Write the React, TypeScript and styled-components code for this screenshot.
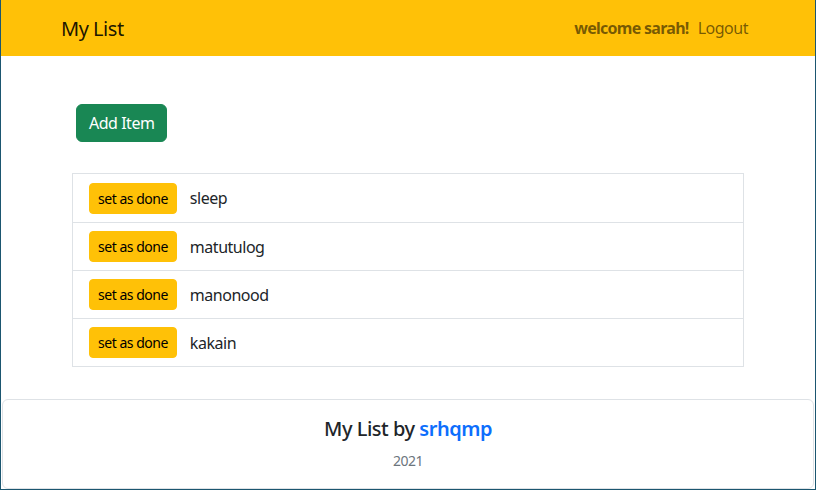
import styled, { createGlobalStyle } from "styled-components";

const GlobalStyle = createGlobalStyle`
  html, body {
    margin: 0;
    padding: 0;
  }
  body {
    font-family: "Noto Sans", "Open Sans", sans-serif;
    letter-spacing: -0.03em;
    color: #212529;
    background: #fff;
  }
  * {
    box-sizing: border-box;
  }
`;

const items = ["sleep", "matutulog", "manonood", "kakain"];

function App() {
  return (
    <>
      <GlobalStyle />
      <Frame>
        <Navbar>
          <NavContainer>
            <Brand>My List</Brand>
            <NavRight>
              <Welcome>welcome sarah!</Welcome>
              <NavLink>Logout</NavLink>
            </NavRight>
          </NavContainer>
        </Navbar>
        <Main>
          <AddRow>
            <AddButton>Add Item</AddButton>
          </AddRow>
          <ListGroup>
            {items.map((item) => (
              <ListItem key={item}>
                <DoneButton>set as done</DoneButton>
                <ItemText>{item}</ItemText>
              </ListItem>
            ))}
          </ListGroup>
        </Main>
        <Footer>
          <FooterTitle>
            My List by <FooterLink>srhqmp</FooterLink>
          </FooterTitle>
          <Year>2021</Year>
        </Footer>
      </Frame>
    </>
  );
}
export default App;

const Frame = styled.div`
  height: 490px;
  display: flex;
  flex-direction: column;
  border-left: 1px solid #1b5670;
  border-right: 1px solid #1b5670;
  border-bottom: 1px solid #1b5670;
`;

const Navbar = styled.nav`
  height: 56px;
  background-color: #ffc107;
  display: flex;
  align-items: center;
`;

const NavContainer = styled.div`
  width: 720px;
  margin: 0 auto;
  padding: 0 12px;
  display: flex;
  align-items: center;
  justify-content: space-between;
`;

const Brand = styled.span`
  font-size: 20px;
  color: rgba(0, 0, 0, 0.9);
  padding-left: 1px;
`;

const NavRight = styled.div`
  display: flex;
  align-items: center;
  gap: 9px;
  padding-right: 8px;
  font-size: 16px;
  color: rgba(0, 0, 0, 0.55);
`;

const Welcome = styled.strong`
  font-weight: 700;
  letter-spacing: -0.045em;
`;

const NavLink = styled.span`
  cursor: pointer;
`;

const Main = styled.main`
  width: 720px;
  margin: 0 auto;
  padding: 48px 24px 0;
`;

const AddRow = styled.div`
  padding-left: 4px;
  margin-bottom: 31px;
`;

const AddButton = styled.button`
  font-family: inherit;
  letter-spacing: inherit;
  font-size: 16px;
  line-height: 24px;
  padding: 6px 12px;
  border: 1px solid #198754;
  border-radius: 6px;
  background-color: #198754;
  color: #fff;
  cursor: pointer;
`;

const ListGroup = styled.ul`
  list-style: none;
  margin: 0;
  padding: 0;
  border: 1px solid #dee2e6;
`;

const ListItem = styled.li`
  height: 48px;
  display: flex;
  align-items: center;
  padding: 0 16px;
  & + & {
    border-top: 1px solid #dee2e6;
  }
`;

const DoneButton = styled.button`
  font-family: inherit;
  letter-spacing: inherit;
  font-size: 14px;
  line-height: 21px;
  padding: 4px 8px;
  border: 1px solid #ffc107;
  border-radius: 4px;
  background-color: #ffc107;
  color: #000;
  cursor: pointer;
`;

const ItemText = styled.span`
  margin-left: 13px;
  font-size: 16px;
`;

const Footer = styled.footer`
  margin: auto 1px 0;
  height: 90px;
  border: 1px solid #dee2e6;
  border-radius: 6px;
  display: flex;
  flex-direction: column;
  align-items: center;
  padding-top: 15px;
`;

const FooterTitle = styled.h5`
  margin: 0;
  font-size: 20px;
  font-weight: 500;
  line-height: 28px;
`;

const FooterLink = styled.a`
  color: #0d6efd;
  font-weight: 600;
  text-decoration: none;
`;

const Year = styled.p`
  margin: 8px 0 0;
  font-size: 14px;
  color: #6c757d;
`;
